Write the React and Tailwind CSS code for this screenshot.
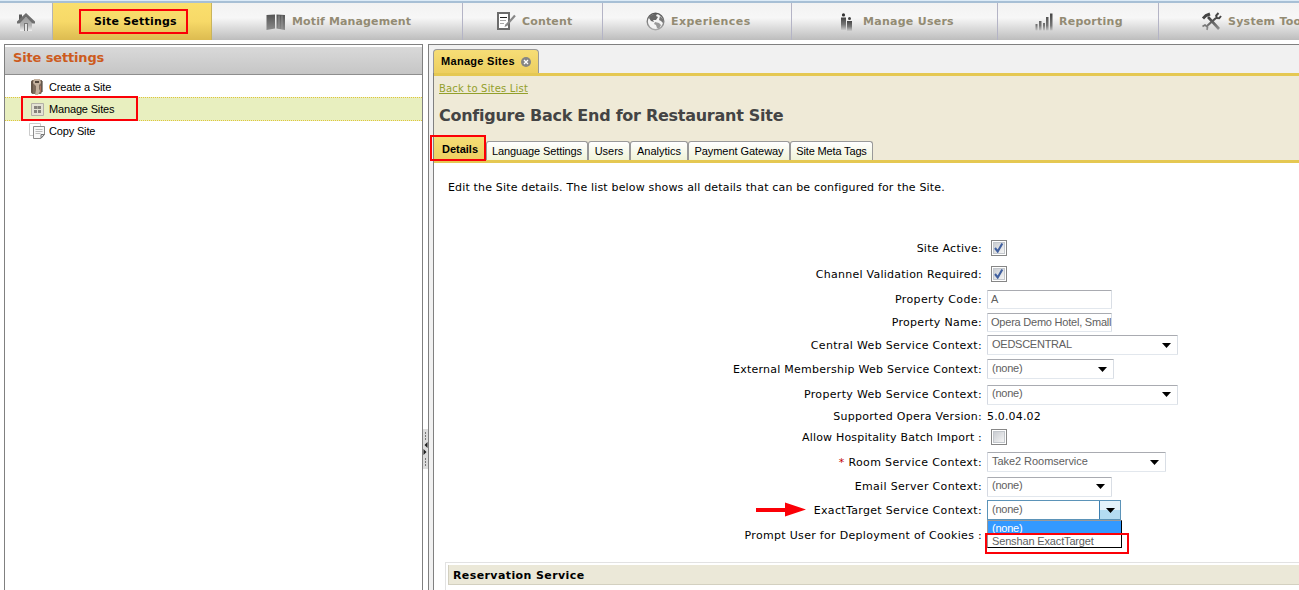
import React from "react";

const VERDANA = "font-['DejaVu_Sans',sans-serif]";
const ARIAL = "font-['Liberation_Sans',sans-serif]";

function HomeIcon() {
  return (
    <svg width="20" height="20" viewBox="0 0 20 20">
      <defs>
        <linearGradient id="house" x1="0" y1="0" x2="0" y2="1">
          <stop offset="0" stopColor="#9a9a9a" />
          <stop offset="0.600" stopColor="#b5b5b5" />
          <stop offset="1" stopColor="#f0f0f0" />
        </linearGradient>
      </defs>
      <path d="M3 2.500h3v4L3 9z" fill="#5a5a5a" />
      <path d="M4 10.500L10 5l6 5.500V19H4z" fill="url(#house)" />
      <path d="M10 1L1 9.500V11.500h2.500L10 5l6.500 6.500H19V9.500z" fill="#6e6e6e" />
      <path d="M8 11h4v8h-1v-7H9v7H8z" fill="#777" />
      <path d="M9 12h2v7H9z" fill="#e4e4e4" />
    </svg>
  );
}

function BookIcon() {
  return (
    <svg width="20" height="18" viewBox="0 0 20 18">
      <defs>
        <linearGradient id="book" x1="0" y1="0" x2="0" y2="1">
          <stop offset="0" stopColor="#555" />
          <stop offset="1" stopColor="#8c8c8c" />
        </linearGradient>
      </defs>
      <path d="M.5 2l8.500-.5v14L.5 17z" fill="url(#book)" />
      <path d="M10.500 1.500l8.500.5v15l-8.500-1.500z" fill="url(#book)" />
      <path d="M13 2.500v13M16 2.500v13.500" stroke="#a0a0a0" strokeWidth="0.800" />
    </svg>
  );
}

function ContentIcon() {
  return (
    <svg width="20" height="19" viewBox="0 0 20 19">
      <path d="M1 1h11v16H1z" fill="#fff" stroke="#6c6c6c" strokeWidth="2" />
      <path d="M3 5.500h7" stroke="#222" />
      <path d="M3 8.500h6M3 11.500h4" stroke="#aaa" />
      <path d="M18 3.500L9.500 13" stroke="#888" strokeWidth="2.200" />
      <path d="M7.500 15l1-3 2 1.800z" fill="#888" />
    </svg>
  );
}

function GlobeIcon() {
  return (
    <svg width="19" height="19" viewBox="0 0 19 19">
      <defs>
        <linearGradient id="globe" x1="0" y1="0" x2="0" y2="1">
          <stop offset="0" stopColor="#555" />
          <stop offset="1" stopColor="#aaa" />
        </linearGradient>
      </defs>
      <circle cx="9.500" cy="9.500" r="8.300" fill="#f4f4f4" stroke="url(#globe)" strokeWidth="1.400" />
      <path d="M4 4q4-3 7-2l-1 2 2 1-2 3-3 0 1 2-3-1-2-3z" fill="#666" />
      <path d="M9 10l4 1 2 2-2 4-2-1-1-3-2-1z" fill="#999" />
      <path d="M14 4l3 3 0 4-2-2-2-1z" fill="#777" />
    </svg>
  );
}

function UsersIcon() {
  return (
    <svg width="13" height="18" viewBox="0 0 13 18">
      <defs>
        <linearGradient id="people" x1="0" y1="0" x2="0" y2="1">
          <stop offset="0" stopColor="#444" />
          <stop offset="0.550" stopColor="#777" />
          <stop offset="1" stopColor="#ccc" />
        </linearGradient>
      </defs>
      <g fill="url(#people)">
        <path d="M1 4.500h5V17H1z" />
        <path d="M7 8h5v10H7z" />
      </g>
      <circle cx="3.500" cy="1.900" r="1.600" fill="#333" />
      <circle cx="9.500" cy="5.400" r="1.500" fill="#444" />
    </svg>
  );
}

function ReportIcon() {
  return (
    <svg width="18" height="18" viewBox="0 0 18 18">
      <defs>
        <linearGradient id="bars" gradientUnits="userSpaceOnUse" x1="0" y1="0" x2="0" y2="18">
          <stop offset="0" stopColor="#444" />
          <stop offset="0.700" stopColor="#777" />
          <stop offset="1" stopColor="#ccc" />
        </linearGradient>
      </defs>
      <path fill="url(#bars)" d="M.5 11h2v6.500h-2zM4 8h2.500v9.500H4zM8 10h2v7.500H8zM11 4h2.500v13.500H11zM15 .5h2.500v17H15z" />
    </svg>
  );
}

function ToolsIcon() {
  return (
    <svg width="21" height="19" viewBox="0 0 21 19">
      <defs>
        <linearGradient id="tools" gradientUnits="userSpaceOnUse" x1="0" y1="0" x2="0" y2="19">
          <stop offset="0.300" stopColor="#444" />
          <stop offset="1" stopColor="#999" />
        </linearGradient>
      </defs>
      <g fill="none" stroke="url(#tools)">
        <path d="M7 5l11 12" strokeWidth="2.600" />
        <path d="M15 6L6 14" strokeWidth="2.200" />
        <path d="M2 6.500l3-3 4-1.500" strokeWidth="3" />
        <path d="M17.500 1l-2.300 2.500.5 2.500 2.500.3L20 4" strokeWidth="2" />
        <path d="M1.500 14.500L4 13l2.500 2L6 18" strokeWidth="1.700" />
      </g>
    </svg>
  );
}

function CreateIcon() {
  return (
    <svg width="16" height="16" viewBox="0 0 16 16">
      <path d="M3 1h10v12l-1 2H3l-1-2V3z" fill="#7d6b5c" />
      <path d="M3 2v12M13 2v11" stroke="#57493e" strokeWidth="1.200" />
      <path d="M5 0h6l1 4-2 2v4l1 2-2 4H6l1-5V7L4 4z" fill="#c4b19e" />
      <path d="M6 2h4v2H6z" fill="#54473c" />
      <path d="M11.500 7v6" stroke="#b0705a" />
    </svg>
  );
}

function ManageIcon() {
  return (
    <svg width="13" height="13" viewBox="0 0 13 13">
      <path d="M.5.5h12v12H.5z" fill="#e4e2d4" stroke="#b3b0a6" />
      <path d="M3 3h7v3H3zM3 7h3v3H3zM7 7h3v3H7z" fill="#85817b" />
      <path d="M6.500 3v3" stroke="#aaa79d" />
    </svg>
  );
}

function CopyIcon() {
  return (
    <svg width="17" height="16" viewBox="0 0 17 16">
      <path d="M.5.5h11v12H.5z" fill="#fff" stroke="#ccc" />
      <path d="M4.500 3.500h11v8l-3.500 4h-7.500z" fill="#f8f8f8" stroke="#8b8b8b" />
      <path d="M6.500 6.500h7M6.500 8.500h7M6.500 10.500h5" stroke="#bbb" />
      <path d="M12 15v-3.500h3.500z" fill="#ddd" stroke="#777" />
    </svg>
  );
}

function NavItem({ className, icon, label, spacing }) {
  return (
    <div className={`flex shrink-0 items-center border-r border-[#b4b4c6] ${className}`}>
      {icon}
      <span className={`whitespace-nowrap pt-[2px] text-[11px] font-bold text-[#938b73] ${spacing}`}>{label}</span>
    </div>
  );
}

function Row({ height, label, required, children, spacing = "tracking-[0.25px]" }) {
  return (
    <div className={`flex items-center ${height}`}>
      <div className={`w-[548px] shrink-0 whitespace-nowrap pt-[2px] text-right ${spacing}`}>
        {required && <span className="text-[#c00000]">* </span>}
        {label}
      </div>
      <div className="ml-[5px] flex items-center">{children}</div>
    </div>
  );
}

function Check({ checked }) {
  return (
    <div className="ml-1 h-4 w-4 border border-[#868686] bg-white p-px">
      <div className="h-full w-full border border-[#c3c7cc] bg-linear-to-br from-[#c9ccd1] to-[#f5f5f5]">
        {checked && (
          <svg width="10" height="10" viewBox="0 0 10 10">
            <path d="M1 5l2.700 3.500L8.300.5" fill="none" stroke="#41609f" strokeWidth="2.100" />
          </svg>
        )}
      </div>
    </div>
  );
}

const fieldBorder = "border border-t-[#a9abb1] border-r-[#d9dee5] border-b-[#e2e7ed] border-l-[#d5d9e2]";

function Field({ value, spacing = "" }) {
  return (
    <div className={`flex h-[19px] w-[125px] items-center whitespace-nowrap rounded-[1px] bg-white pl-[3px] text-[11px] text-[#606060] ${fieldBorder} ${ARIAL} ${spacing}`}>
      {value}
    </div>
  );
}

function Arrow() {
  return (
    <svg width="9" height="5" viewBox="0 0 9 5">
      <path d="M0 0h9L4.500 5z" fill="#000" />
    </svg>
  );
}

function Select({ width, value, spacing = "tracking-[-0.25px]" }) {
  return (
    <div className={`flex h-5 items-center justify-between rounded-[1px] bg-white pl-1 pr-[6px] text-[11px] text-[#606060] ${fieldBorder} ${ARIAL} ${width}`}>
      <span className={`-mt-[2px] ${spacing}`}>{value}</span>
      <Arrow />
    </div>
  );
}

function OpenSelect() {
  return (
    <div className={`relative flex h-5 w-[134px] justify-between border border-[#5b93b8] bg-white text-[11px] text-[#606060] ${ARIAL}`}>
      <span className="pl-1 leading-[17px] tracking-[-0.25px]">(none)</span>
      <div className="flex w-[21px] items-center justify-center border-l border-[#3c7fb1] bg-linear-to-b from-[#e4f3fb] from-50% to-[#b4dcf2] to-50%">
        <Arrow />
      </div>
      <div className="absolute left-[-1px] top-[19px] z-10 h-[28px] w-[135px] border border-b-black border-l-[#999] border-r-black border-t-[#999] bg-white">
        <div className="h-[13px] bg-[#3399ff] pl-1 leading-[14px] tracking-[-0.25px] text-white">(none)</div>
        <div className="h-[13px] pl-1 leading-[14px] tracking-[-0.15px]">Senshan ExactTarget</div>
      </div>
      <div className="absolute left-[-3px] top-[32px] z-20 h-[21px] w-[144px] border-2 border-[#fb0007]" />
      <svg className="absolute left-[-233px] top-0" width="52" height="16" viewBox="0 0 52 16">
        <path d="M1 7h29V1.500L51 8.500 30 15.500V11H1z" fill="#fb0007" />
      </svg>
    </div>
  );
}

function Tab({ width, children, spacing = "" }) {
  return (
    <div className={`flex h-[19px] shrink-0 items-center justify-center whitespace-nowrap rounded-t-[3px] border border-b-0 border-[#999] bg-linear-to-b from-white to-[#f0f3d8] ${width}`}>
      <span className={spacing}>{children}</span>
    </div>
  );
}

export default function App() {
  return (
    <div className={`flex h-[590px] w-[1299px] flex-col overflow-hidden bg-white text-[11px] text-black ${VERDANA}`}>
      <div className="h-[3px] shrink-0 border-b-2 border-[#a7bfd5] bg-[#dcebf7]" />
      <nav className="flex h-[37px] shrink-0 overflow-hidden bg-linear-to-b from-[#f2f2f2] via-[#f7f7f7] via-40% to-[#bdbdbd]">
        <div className="flex w-[53px] shrink-0 items-center border-r border-[#b4b4b4] pl-4">
          <HomeIcon />
        </div>
        <div className="flex w-[159px] shrink-0 items-center border-r border-[#c9b45c] bg-linear-to-b from-[#fadf6d] via-[#f7d968] to-[#dcbb50] pl-[26px]">
          <div className="flex h-[25px] w-[109px] items-center border-2 border-[#fb0007] pl-[13px] pt-px">
            <span className="whitespace-nowrap text-[11px] font-bold tracking-[0.2px]">Site Settings</span>
          </div>
        </div>
        <NavItem className="w-[251px] gap-[6px] pl-[54px]" icon={<BookIcon />} label="Motif Management" spacing="tracking-[0.13px]" />
        <NavItem className="w-[140px] gap-[5px] pl-[34px]" icon={<ContentIcon />} label="Content" spacing="tracking-[0.15px]" />
        <NavItem className="w-[189px] gap-[6px] pl-[43px]" icon={<GlobeIcon />} label="Experiences" spacing="tracking-[0.43px]" />
        <NavItem className="w-[206px] gap-[10px] pl-[48px]" icon={<UsersIcon />} label="Manage Users" spacing="tracking-[0.27px]" />
        <NavItem className="w-[161px] gap-[6px] pl-[37px]" icon={<ReportIcon />} label="Reporting" spacing="tracking-[0.25px]" />
        <NavItem className="w-[200px] gap-[6px] pl-[42px]" icon={<ToolsIcon />} label="System Tools" spacing="tracking-[0.25px]" />
      </nav>

      <div className="flex min-h-0 flex-1 pl-1 pt-1">
        <aside className="flex w-[419px] shrink-0 flex-col border-l border-r border-t border-[#808080] bg-white">
          <div className="mt-[2px] h-[28px] border-b border-[#8e8e8e] bg-linear-to-b from-[#d9d9d9] to-[#c6c6c6] pl-2 text-[13px] font-bold leading-[22px] tracking-[-0.15px] text-[#cd5b1d]">
            Site settings
          </div>
          <ul className={`pt-[2px] text-[11px] tracking-[-0.16px] ${ARIAL}`}>
            <li className="flex h-5 items-center pl-6">
              <div className="flex w-5 justify-start"><CreateIcon /></div>Create a Site
            </li>
            <li className="relative flex h-6 items-center border-b border-t border-dotted border-[#e0c63a] bg-[#e8efbf] pl-[26px]">
              <div className="w-[18px]"><ManageIcon /></div>Manage Sites
              <div className="absolute left-4 top-[-2px] h-[25px] w-[117px] border-2 border-[#fb0007]" />
            </li>
            <li className="flex h-5 items-center pl-6">
              <div className="w-5"><CopyIcon /></div>Copy Site
            </li>
          </ul>
        </aside>

        <div className="flex w-[5px] shrink-0 flex-col pt-[385px]">
          <svg width="5" height="40" viewBox="0 0 5 40">
            <path d="M0 0h5v40H0z" fill="#dcdcdc" />
            <path d="M2.500 3v9M2.500 29v9" stroke="#777" strokeDasharray="2 1" />
            <path d="M4.500 13v6L1.500 16zM.5 20v6l3-3z" fill="#222" />
          </svg>
        </div>

        <main className="flex min-w-0 flex-1 flex-col border-l border-t border-[#808080] bg-[#f1f1f1] pl-1">
          <div className="flex h-[28px] shrink-0 items-end">
            <div className={`flex h-[24px] w-[106px] items-center gap-[7px] rounded-t-[4px] border border-b-0 border-[#999] bg-linear-to-b from-[#f6dd76] to-[#edcf60] pl-[7px] font-bold ${ARIAL}`}>
              <span className="whitespace-nowrap text-[11px] tracking-[0.3px]">Manage Sites</span>
              <svg className="-ml-px" width="10" height="10" viewBox="0 0 10 10">
                <circle cx="5" cy="5" r="5" fill="#858585" />
                <path d="M3 3l4 4M7 3L3 7" stroke="#fff" strokeWidth="1.300" />
              </svg>
            </div>
          </div>
          <div className="flex min-h-0 flex-1 flex-col border-l border-[#808080] bg-white">
            <div className="flex h-[90px] shrink-0 flex-col border-b-[3px] border-t-[3px] border-[#e5c852] bg-[#efead7]">
              <a className="ml-[5px] mt-[6px] h-[14px] self-start whitespace-nowrap text-[10px] leading-[14px] tracking-[0.18px] text-[#93a02b] underline">Back to Sites List</a>
              <h1 className="ml-[5px] mt-[8px] h-[24px] whitespace-nowrap text-[16px] font-bold leading-[24px] tracking-[-0.27px] text-[#444]">
                Configure Back End for Restaurant Site
              </h1>
              <div className={`mt-auto flex items-end ${ARIAL}`}>
                <div className="relative flex h-[24px] w-[52px] items-center justify-center rounded-t-[3px] bg-linear-to-b from-[#f6dd76] to-[#edcf60] pt-[2px] font-bold">
                  <span>Details</span>
                  <div className="absolute left-[-4px] top-[-1px] h-[26px] w-14 border-2 border-[#fb0007]" />
                </div>
                <Tab width="w-[102px]" spacing="tracking-[-0.1px]">Language Settings</Tab>
                <Tab width="w-[42px]">Users</Tab>
                <Tab width="w-[58px]">Analytics</Tab>
                <Tab width="w-[102px]" spacing="tracking-[-0.05px]">Payment Gateway</Tab>
                <Tab width="w-[83px]" spacing="tracking-[-0.15px]">Site Meta Tags</Tab>
              </div>
            </div>

            <p className="ml-[14px] mt-[17px] h-[16px] shrink-0 whitespace-nowrap leading-[16px] tracking-[0.165px]">
              Edit the Site details. The list below shows all details that can be configured for the Site.
            </p>

            <div className="mt-[39px] shrink-0">
              <Row height="h-[26px]" label="Site Active:"><Check checked /></Row>
              <Row height="h-[26px]" label="Channel Validation Required:"><Check checked /></Row>
              <Row height="h-[24px]" label="Property Code:" spacing="tracking-[0.36px]"><Field value="A" /></Row>
              <Row height="h-[22px]" label="Property Name:" spacing="tracking-[0.29px]"><Field value="Opera Demo Hotel, Small" spacing="tracking-[-0.22px]" /></Row>
              <Row height="h-[24px]" label="Central Web Service Context:" spacing="tracking-[0.33px]"><Select width="w-[191px]" value="OEDSCENTRAL" /></Row>
              <Row height="h-[24px]" label="External Membership Web Service Context:"><Select width="w-[127px]" value="(none)" /></Row>
              <Row height="h-[27px]" label="Property Web Service Context:" spacing="tracking-[0.33px]"><Select width="w-[191px]" value="(none)" /></Row>
              <Row height="h-[17px]" label="Supported Opera Version:" spacing="tracking-[0.28px]"><span className="pt-[2px] tracking-[0.15px]">5.0.04.02</span></Row>
              <Row height="h-[24px]" label="Allow Hospitality Batch Import :" spacing="tracking-[0.19px]"><Check /></Row>
              <Row height="h-[26px]" label="Room Service Context:" required spacing="tracking-[0.37px]"><Select width="w-[179px]" value="Take2 Roomservice" spacing="tracking-[-0.05px]" /></Row>
              <Row height="h-[23px]" label="Email Server Context:" spacing="tracking-[0.33px]"><Select width="w-[125px]" value="(none)" /></Row>
              <Row height="h-[24px]" label="ExactTarget Service Context:" spacing="tracking-[0.33px]"><OpenSelect /></Row>
              <Row height="h-[26px]" label="Prompt User for Deployment of Cookies :" spacing="tracking-[0.31px]" />
            </div>

            <section className="ml-[11px] mt-[14px] flex-1 border-l border-t border-[#e2e2e2] pl-[2px] pt-[2px]">
              <h2 className="h-[20px] border-b border-l border-[#d3d0c0] bg-[#ebe8d8] pl-1 pt-[2px] font-bold leading-[18px] tracking-[0.4px]">Reservation Service</h2>
            </section>
          </div>
        </main>
      </div>
    </div>
  );
}
